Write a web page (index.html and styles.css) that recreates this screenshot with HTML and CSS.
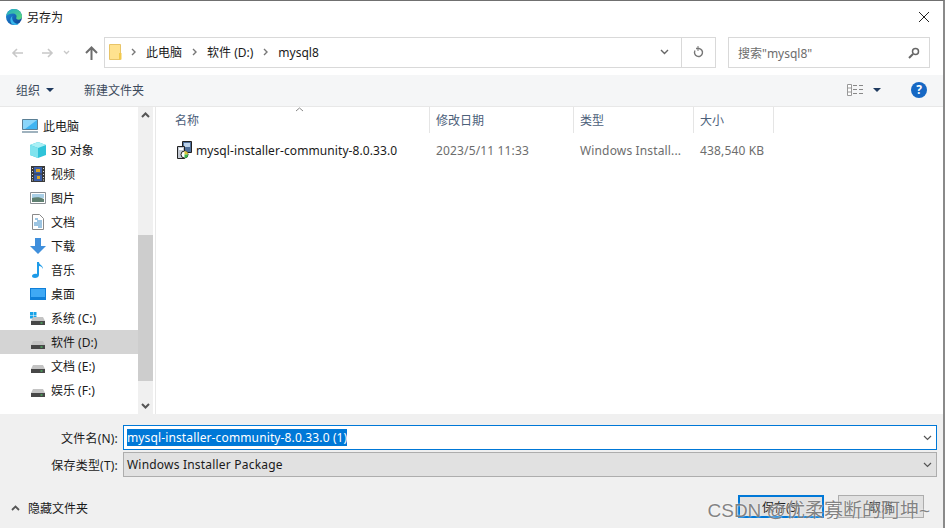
FILE: index.html
```html
<!DOCTYPE html>
<html lang="zh-CN">
<head>
  <meta charset="UTF-8" />
  <title>另存为</title>
  <link rel="stylesheet" href="styles.css">
</head>
<body>
  <main class="dialog">
    <header class="titlebar">
      <svg class="edge" width="16" height="16" viewBox="0 0 16 16">
        <defs>
          <linearGradient id="edgeTop" x1="0" y1="0" x2="1" y2="1"><stop offset="0" stop-color="#1fa8c9"/><stop offset="1" stop-color="#5fdc7a"/></linearGradient>
          <linearGradient id="edgeLow" x1="0" y1="0" x2="1" y2="1"><stop offset="0" stop-color="#1f8fe0"/><stop offset="1" stop-color="#0c3f8e"/></linearGradient>
        </defs>
        <circle cx="8" cy="8" r="8" fill="url(#edgeLow)"/>
        <path d="M.3 7C1 2.500 4.500 0 8 0c4.500 0 8 3.500 8 7.500 0 2.500-2.500 3.500-4.500 3-1.500-.5-1.500-1.500-1-2.500.5-1.500-1-3.500-3.500-3.500C4 4.500 1.500 5.500.3 7z" fill="url(#edgeTop)"/>
        <path d="M9 16c-3.500 0-5-3-4.500-6 .3-1.500 1-2.500 2-3-1 2 0 6 3.500 7.500 1.500.5 3 .3 4-.3C13 15 11 16 9 16z" fill="#38b6ea"/>
      </svg>
      <span class="title">另存为</span>
      <svg class="close" width="10" height="10" viewBox="0 0 10 10"><path d="M0 0l10 10M10 0L0 10" stroke="#222" stroke-width="1" fill="none"/></svg>
    </header>

    <div class="navbar">
      <svg class="nav-icon" width="13" height="12" viewBox="0 0 13 12"><path d="M12 6H2M6 2L2 6l4 4" stroke="#c8c8c8" stroke-width="1.6" fill="none"/></svg>
      <svg class="nav-icon fwd" width="13" height="12" viewBox="0 0 13 12"><path d="M1 6h10M7 2l4 4-4 4" stroke="#c8c8c8" stroke-width="1.6" fill="none"/></svg>
      <svg class="nav-icon drop" width="7" height="5" viewBox="0 0 7 5"><path d="M1 1l2.500 2.500L6 1" stroke="#c8c8c8" stroke-width="1.300" fill="none"/></svg>
      <svg class="nav-icon up" width="13" height="14" viewBox="0 0 13 14"><path d="M6.500 14V2M1 7l5.500-5.500L12 7" stroke="#6d6d6d" stroke-width="2" fill="none"/></svg>
      <div class="address">
        <svg class="folder" width="13" height="16" viewBox="0 0 13 16"><path d="M.5.500h11v15H.5z" fill="#ffe28f" stroke="#e8c468"/><path d="M10 9h2.500v6.500H10z" fill="#f2c94c"/></svg>
        <svg class="crumb-sep" width="5" height="8" viewBox="0 0 5 8"><path d="M1 1l3 3-3 3" stroke="#777" stroke-width="1.400" fill="none"/></svg>
        <span class="crumb">此电脑</span>
        <svg class="crumb-sep" width="5" height="8" viewBox="0 0 5 8"><path d="M1 1l3 3-3 3" stroke="#777" stroke-width="1.400" fill="none"/></svg>
        <span class="crumb">软件 (D:)</span>
        <svg class="crumb-sep" width="5" height="8" viewBox="0 0 5 8"><path d="M1 1l3 3-3 3" stroke="#777" stroke-width="1.400" fill="none"/></svg>
        <span class="crumb">mysql8</span>
        <svg class="addr-drop" width="9" height="6" viewBox="0 0 9 6"><path d="M1 1l3.500 3.500L8 1" stroke="#666" stroke-width="1.400" fill="none"/></svg>
        <div class="refresh">
          <svg width="11" height="12" viewBox="0 0 11 12"><path d="M3 2.500h3a4 4 0 1 1-4 2" stroke="#777" stroke-width="1.400" fill="none"/><path d="M5 0v5" stroke="#777" stroke-width="1"/></svg>
        </div>
      </div>
      <div class="search">
        <span>搜索"mysql8"</span>
        <svg width="12" height="12" viewBox="0 0 12 12"><circle cx="7.500" cy="4.500" r="3" stroke="#666" stroke-width="1.500" fill="none"/><path d="M5 7l-4 4" stroke="#666" stroke-width="2"/></svg>
      </div>
    </div>

    <div class="toolbar">
      <span class="tool">组织</span>
      <svg class="tri" width="8" height="4" viewBox="0 0 8 4"><path d="M0 0h8L4 4z" fill="#1f3a5f"/></svg>
      <span class="tool new-folder">新建文件夹</span>
      <svg class="views" width="16" height="12" viewBox="0 0 16 12"><path d="M.5.500h4v11h-4zM.5 4h4M.5 8h4" stroke="#999" fill="#fff"/><path d="M6 1.500h4M12 1.500h4M6 5.500h4M12 5.500h4M6 9.500h4M12 9.500h4" stroke="#888"/></svg>
      <svg class="tri view-tri" width="8" height="4" viewBox="0 0 8 4"><path d="M0 0h8L4 4z" fill="#1f3a5f"/></svg>
      <span class="help">?</span>
    </div>

    <div class="content">
      <nav class="tree">
        <div class="tree-list">
          <div class="tree-row top">
            <svg width="16" height="14" viewBox="0 0 16 14"><path d="M.5.500h15v10H.5z" fill="#3fb4f2" stroke="#5b7f95"/><path d="M1 1h14L3 10H1z" fill="#8bd6fa"/><path d="M0 12h16v2H0z" fill="#9fb2be"/></svg>
            <span>此电脑</span>
          </div>
          <div class="tree-row">
            <svg width="16" height="16" viewBox="0 0 16 16"><path d="M8 0l8 3v10l-8 3-8-3V3z" fill="#2fc3d9"/><path d="M0 3l8 3 8-3-8-3z" fill="#a9f0f5"/><path d="M0 3l8 3v10l-8-3z" fill="#7fe3ee"/></svg>
            <span>3D 对象</span>
          </div>
          <div class="tree-row">
            <svg width="14" height="16" viewBox="0 0 14 16"><path d="M0 0h14v16H0z" fill="#3a3a3a"/><path d="M3 1h8v6.500H3z" fill="#3c5fa8"/><path d="M3 8.500h8V15H3z" fill="#3c5fa8"/><path d="M5 3h4v3H5zM6 10h3v3H6z" fill="#d8a327"/><path d="M1 2h1v1H1zM1 5h1v1H1zM1 8h1v1H1zM1 11h1v1H1zM1 13.500h1v1H1zM12 2h1v1h-1zM12 5h1v1h-1zM12 8h1v1h-1zM12 11h1v1h-1zM12 13.500h1v1h-1z" fill="#ddd"/></svg>
            <span>视频</span>
          </div>
          <div class="tree-row">
            <svg width="16" height="12" viewBox="0 0 16 12"><path d="M.5.500h15v11H.5z" fill="#fff" stroke="#8a8f94"/><path d="M2 2h12v4H2z" fill="#a9cfe6"/><path d="M2 6c4-1 8-1 12 1v3H2z" fill="#5f8071"/></svg>
            <span>图片</span>
          </div>
          <div class="tree-row">
            <svg width="12" height="16" viewBox="0 0 12 16"><path d="M.5.500h7l4 4v11H.5z" fill="#fff" stroke="#8a8a8a"/><path d="M3 5h3M5 7h5M2 9h8M2 11h8M6 13h4" stroke="#3b8ac4"/></svg>
            <span>文档</span>
          </div>
          <div class="tree-row">
            <svg width="16" height="16" viewBox="0 0 16 16"><path d="M5 0h6v8h5l-8 8-8-8h5z" fill="#3f8fdc"/></svg>
            <span>下载</span>
          </div>
          <div class="tree-row">
            <svg width="12" height="16" viewBox="0 0 12 16"><path d="M5 0h2c0 3 4 3 4 7-1-2-2-3-4-3v9c0 2-2 3-4 3s-3-1-3-2 2-3 5-2z" fill="#1e9be8"/></svg>
            <span>音乐</span>
          </div>
          <div class="tree-row">
            <svg width="16" height="12" viewBox="0 0 16 12"><path d="M0 0h16v12H0z" fill="#0f7fd8"/><path d="M1 1h14v8H1z" fill="#3fa9f5"/></svg>
            <span>桌面</span>
          </div>
          <div class="tree-row">
            <svg width="16" height="14" viewBox="0 0 16 14"><path d="M0 1h3v3H0zM3.500 1h3v3h-3zM0 4.500h3v3H0zM3.500 4.500h3v3h-3z" fill="#19a3e8"/><path d="M3 6h10l2 4H1z" fill="#c4c4c4"/><path d="M1 10h14v4H1z" fill="#474747"/><path d="M10.500 11.500h2v1h-2z" fill="#4ee06a"/></svg>
            <span>系统 (C:)</span>
          </div>
          <div class="tree-row active">
            <svg width="16" height="14" viewBox="0 0 16 14"><path d="M3 6h10l2 4H1z" fill="#c4c4c4"/><path d="M1 10h14v4H1z" fill="#474747"/><path d="M10.500 11.500h2v1h-2z" fill="#4ee06a"/></svg>
            <span>软件 (D:)</span>
          </div>
          <div class="tree-row">
            <svg width="16" height="14" viewBox="0 0 16 14"><path d="M3 6h10l2 4H1z" fill="#c4c4c4"/><path d="M1 10h14v4H1z" fill="#474747"/><path d="M10.500 11.500h2v1h-2z" fill="#4ee06a"/></svg>
            <span>文档 (E:)</span>
          </div>
          <div class="tree-row">
            <svg width="16" height="14" viewBox="0 0 16 14"><path d="M3 6h10l2 4H1z" fill="#c4c4c4"/><path d="M1 10h14v4H1z" fill="#474747"/><path d="M10.500 11.500h2v1h-2z" fill="#4ee06a"/></svg>
            <span>娱乐 (F:)</span>
          </div>
        </div>
        <div class="scrollbar">
          <svg width="9" height="6" viewBox="0 0 9 6"><path d="M1 5l3.500-3.500L8 5" stroke="#555" stroke-width="2" fill="none"/></svg>
          <div class="thumb"></div>
          <svg width="9" height="6" viewBox="0 0 9 6"><path d="M1 1l3.500 3.500L8 1" stroke="#555" stroke-width="2" fill="none"/></svg>
        </div>
      </nav>

      <section class="files">
        <div class="file-head">
          <div class="col name">名称<svg class="sort" width="9" height="5" viewBox="0 0 9 5"><path d="M1 4l3.500-3L8 4" stroke="#888" fill="none"/></svg></div>
          <div class="col date">修改日期</div>
          <div class="col type">类型</div>
          <div class="col size">大小</div>
        </div>
        <div class="file-row">
          <div class="col name">
            <svg width="16" height="18" viewBox="0 0 16 18"><path d="M6.500.500h9v11h-9z" fill="#4f6f9a" stroke="#222"/><path d="M8 2h6v4H8z" fill="#bcd2ea"/><path d="M1.500 5.500h7v12h-7z" fill="#c3c9d3" stroke="#222"/><path d="M3 7h4v2H3z" fill="#fff"/><circle cx="8.500" cy="13.500" r="3.500" fill="#fff" stroke="#222"/><path d="M8.500 13.500V10a3.500 3.500 0 0 1 3.500 3.500z" fill="#d8c53a"/><path d="M8.500 13.500H12A3.500 3.500 0 0 1 8.500 17z" fill="#3cb44a"/></svg>
            <span>mysql-installer-community-8.0.33.0</span>
          </div>
          <div class="col date">2023/5/11 11:33</div>
          <div class="col type">Windows Install...</div>
          <div class="col size">438,540 KB</div>
        </div>
      </section>
    </div>

    <footer class="savebar">
      <div class="field-row">
        <label class="field-label">文件名(N):</label>
        <div class="field input">
          <span class="selected">mysql-installer-community-8.0.33.0 (1)</span>
          <svg width="9" height="6" viewBox="0 0 9 6"><path d="M1 1l3.500 3.500L8 1" stroke="#555" stroke-width="1.200" fill="none"/></svg>
        </div>
      </div>
      <div class="field-row">
        <label class="field-label">保存类型(T):</label>
        <div class="field select">
          <span>Windows Installer Package</span>
          <svg width="9" height="6" viewBox="0 0 9 6"><path d="M1 1l3.500 3.500L8 1" stroke="#555" stroke-width="1.200" fill="none"/></svg>
        </div>
      </div>
      <div class="actions">
        <svg width="9" height="6" viewBox="0 0 9 6"><path d="M1 5l3.500-3.500L8 5" stroke="#555" stroke-width="1.800" fill="none"/></svg>
        <span class="hide-folders">隐藏文件夹</span>
        <button class="btn primary">保存(S)</button>
        <button class="btn">取消</button>
      </div>
    </footer>
    <div class="watermark">CSDN @优柔寡断的阿坤~</div>
  </main>
</body>
</html>
```

FILE: styles.css
```css
* {
  box-sizing: border-box;
  margin: 0;
  padding: 0;
}
html, body {
  width: 945px;
  height: 528px;
  overflow: hidden;
}
body {
  font-family: "Noto Sans", "Noto Sans CJK SC", sans-serif;
  font-size: 12px;
  color: #1a1a1a;
  background: #fff;
}
.dialog {
  position: relative;
  width: 945px;
  height: 528px;
  border-top: 1px solid #707070;
  border-right: 2px solid #8a8a8a;
  display: flex;
  flex-direction: column;
}
.titlebar {
  height: 31px;
  display: flex;
  align-items: center;
  padding: 0 14px 0 6px;
  flex: none;
}
.title {
  margin-left: 5px;
}
.close {
  margin-left: auto;
}
.navbar {
  height: 43px;
  flex: none;
  display: flex;
  align-items: center;
  padding: 4px 6px 6px 11px;
}
.nav-icon.fwd {
  margin-left: 17px;
}
.nav-icon.drop {
  margin-left: 9px;
}
.nav-icon.up {
  margin-left: 15px;
}
.address {
  margin-left: 6px;
  width: 612px;
  height: 31px;
  border: 1px solid #d9d9d9;
  display: flex;
  align-items: center;
  padding: 0 0 1px 4px;
}
.folder {
  margin-right: 9px;
}
.crumb {
  margin: 0 10px 0 10px;
}
.addr-drop {
  margin-left: auto;
  margin-right: 12px;
}
.refresh {
  width: 34px;
  height: 29px;
  border-left: 1px solid #d9d9d9;
  display: flex;
  align-items: center;
  justify-content: center;
}
.search {
  margin-left: 12px;
  width: 202px;
  height: 31px;
  border: 1px solid #d9d9d9;
  display: flex;
  align-items: center;
  justify-content: space-between;
  padding: 0 9px;
  color: #6d6d6d;
}
.toolbar {
  height: 32px;
  flex: none;
  background: #f5f6f7;
  border-bottom: 1px solid #e8e8e8;
  display: flex;
  align-items: center;
  padding: 0 0 2px 16px;
  color: #3c4a5c;
}
.tri {
  margin-left: 6px;
}
.new-folder {
  margin-left: 30px;
}
.views {
  margin-left: auto;
}
.view-tri {
  margin-left: 10px;
}
.help {
  width: 16px;
  height: 16px;
  margin: 0 16px 0 30px;
  border-radius: 50%;
  background: #1668c4;
  color: #fff;
  font-weight: 700;
  text-align: center;
  line-height: 16px;
}
.content {
  flex: 1;
  display: flex;
  min-height: 0;
}
.tree {
  width: 156px;
  flex: none;
  display: flex;
  border-right: 1px solid #e8e8e8;
}
.tree-list {
  width: 138px;
  padding-top: 7px;
}
.tree-row {
  height: 24px;
  display: flex;
  align-items: center;
  padding-left: 51px;
  position: relative;
}
.tree-row svg {
  position: absolute;
  left: 38px;
  transform: translateX(-50%);
}
.tree-row.top {
  padding-left: 43px;
}
.tree-row.top svg {
  left: 30px;
}
.tree-row.active {
  background: #d4d4d4;
}
.scrollbar {
  width: 15px;
  background: #f0f0f0;
  display: flex;
  flex-direction: column;
  align-items: center;
  justify-content: space-between;
  padding: 5px 0;
}
.thumb {
  width: 15px;
  height: 146px;
  background: #cdcdcd;
  margin-top: 104px;
  margin-bottom: 9px;
}
.files {
  flex: 1;
}
.file-head, .file-row {
  display: grid;
  grid-template-columns: 274px 144px 120px 80px;
}
.file-head {
  height: 26px;
  color: #4c607a;
}
.file-head .col {
  height: 26px;
  border-right: 1px solid #e5e5e5;
  padding-left: 6px;
  line-height: 27px;
  position: relative;
}
.file-head .name {
  padding-left: 19px;
}
.sort {
  position: absolute;
  left: 139px;
  top: 0;
}
.file-row {
  height: 34px;
  align-items: center;
  color: #6d6d6d;
  letter-spacing: 0.15px;
}
.file-row .col {
  padding-left: 6px;
}
.file-row .name {
  display: flex;
  align-items: center;
  padding-left: 20px;
  color: #1a1a1a;
  letter-spacing: 0.09px;
}
.file-row .name span {
  margin-left: 4px;
}
.savebar {
  height: 114px;
  flex: none;
  background: #f0f0f0;
  padding-top: 11px;
}
.field-row {
  display: flex;
  align-items: center;
  margin-bottom: 2px;
}
.field-label {
  width: 118px;
  text-align: right;
  margin-right: 5px;
  color: #1a1a1a;
  letter-spacing: 0.2px;
}
.field {
  width: 814px;
  height: 25px;
  display: flex;
  align-items: center;
  justify-content: space-between;
  padding: 0 4px 0 3px;
}
.field.input {
  background: #fff;
  border: 1px solid #0078d7;
}
.selected {
  background: #0078d7;
  color: #fff;
  letter-spacing: 0.13px;
}
.field.select {
  background: #e1e1e1;
  border: 1px solid #adadad;
  letter-spacing: 0.2px;
}
.actions {
  display: flex;
  align-items: center;
  margin-top: 18px;
  padding-left: 11px;
}
.hide-folders {
  margin-left: 8px;
}
.btn {
  width: 86px;
  height: 23px;
  margin-bottom: 3px;
  font: inherit;
  background: #e1e1e1;
  border: 1px solid #adadad;
  color: #1a1a1a;
}
.btn.primary {
  margin-left: auto;
  border: 2px solid #0078d7;
}
.btn + .btn {
  margin: 0 19px 3px 14px;
}
.watermark {
  position: absolute;
  right: 13px;
  bottom: 6px;
  font-family: "Liberation Sans", "Noto Sans CJK SC", sans-serif;
  font-size: 19px;
  color: rgba(110, 110, 110, 0.85);
  text-shadow: 0 0 2px #fff;
  white-space: nowrap;
}
```
